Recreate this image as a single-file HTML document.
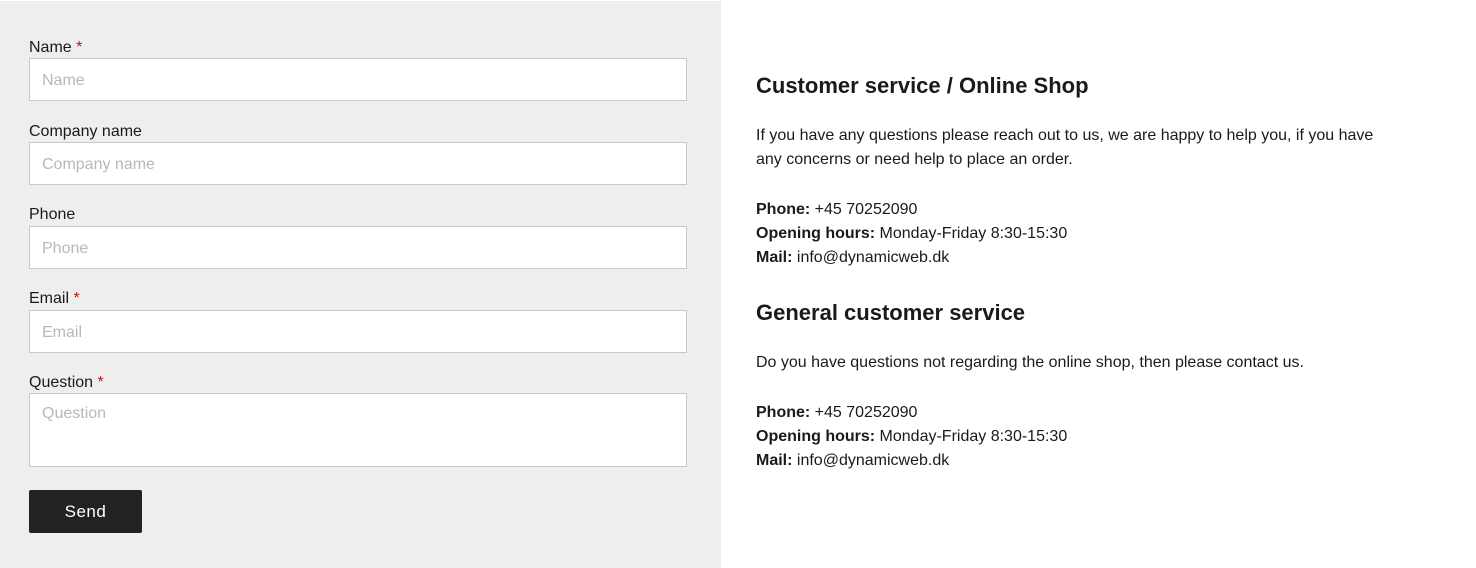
<!DOCTYPE html>
<html><head><style>
*{margin:0;padding:0;box-sizing:border-box}
body{width:1476px;height:568px;background:#fff;font-family:"Liberation Sans",sans-serif;color:#1a1a1a;position:relative;overflow:hidden}
.left{position:absolute;left:0;top:1px;width:721px;height:567px;background:#eee}
.lbl{position:absolute;left:29px;font-size:16px;line-height:20px}
.lbl span{color:#b01c1c}
.inp{position:absolute;left:29px;width:658px;height:43px;background:#fff;border:1px solid #c8c8c8;font-size:16px;color:#b8b8b8;padding:12px 12px;line-height:20px}
.btn{position:absolute;left:29px;top:490px;width:113px;height:43px;background:#222;color:#fff;font-size:17px;text-align:center;line-height:44px;letter-spacing:.5px;border-radius:2px}
.right{position:absolute;left:756px;font-size:16px;line-height:24px}
h2{font-size:22px;font-weight:bold;line-height:28px;position:absolute;left:756px}
b{font-weight:bold}
</style></head><body>
<div class="left">
<div class="lbl" style="top:37px">Name <span>*</span></div>
<div class="inp" style="top:57px">Name</div>
<div class="lbl" style="top:121px">Company name</div>
<div class="inp" style="top:141px">Company name</div>
<div class="lbl" style="top:204px">Phone</div>
<div class="inp" style="top:225px">Phone</div>
<div class="lbl" style="top:288px">Email <span>*</span></div>
<div class="inp" style="top:309px">Email</div>
<div class="lbl" style="top:372px">Question <span>*</span></div>
<div class="inp" style="top:392px;height:74px;padding-top:10px">Question</div>
<div class="btn" style="top:489px">Send</div>
</div>
<h2 style="top:72px">Customer service / Online Shop</h2>
<div class="right" style="top:124px;width:640px">If you have any questions please reach out to us, we are happy to help you, if you have any concerns or need help to place an order.</div>
<div class="right" style="top:198px"><b>Phone:</b> +45 70252090<br><b>Opening hours:</b> Monday-Friday 8:30-15:30<br><b>Mail:</b> info@dynamicweb.dk</div>
<h2 style="top:299px">General customer service</h2>
<div class="right" style="top:351px">Do you have questions not regarding the online shop, then please contact us.</div>
<div class="right" style="top:401px"><b>Phone:</b> +45 70252090<br><b>Opening hours:</b> Monday-Friday 8:30-15:30<br><b>Mail:</b> info@dynamicweb.dk</div>
</body></html>
